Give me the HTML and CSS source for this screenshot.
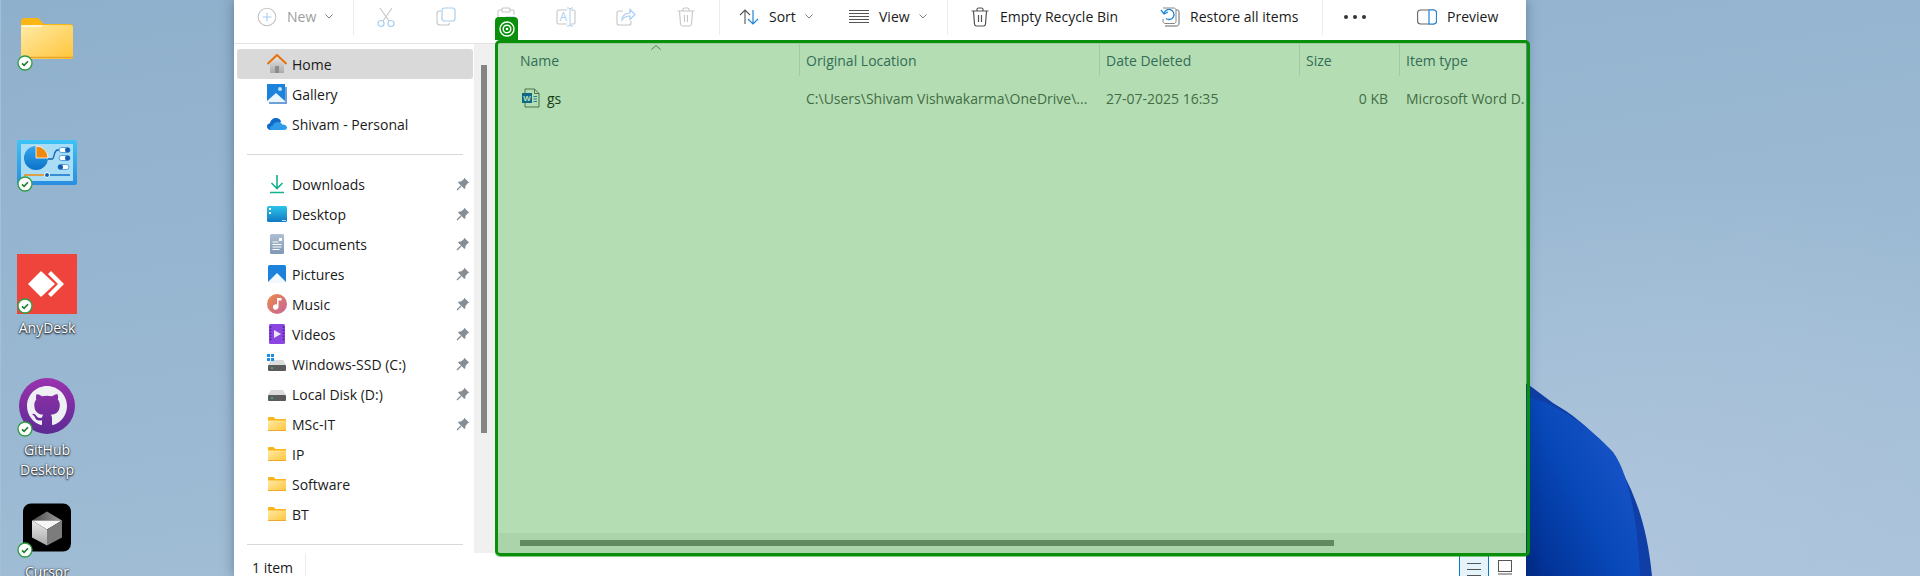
FILE: index.html
```html
<!DOCTYPE html>
<html lang="en">
<head>
<meta charset="utf-8">
<title>Recycle Bin</title>
<link rel="stylesheet" href="styles.css">
</head>
<body>
<svg class="defs" aria-hidden="true">
  <defs>
    <linearGradient id="gFolder" x1="0" y1="0" x2="1" y2="1"><stop offset="0" stop-color="#ffeaa6"/><stop offset="1" stop-color="#ffc53a"/></linearGradient>
    <linearGradient id="gHouse" x1="0" y1="0" x2="0" y2="1"><stop offset="0" stop-color="#e4e4e4"/><stop offset="1" stop-color="#a9a9a9"/></linearGradient>
    <linearGradient id="gBlob" x1="0" y1="1" x2="1" y2="0.35"><stop offset="0" stop-color="#00207a"/><stop offset="0.3" stop-color="#03369c"/><stop offset="0.6" stop-color="#0748b8"/><stop offset="1" stop-color="#1b55ca"/></linearGradient>
    <linearGradient id="gPurple" x1="0" y1="0" x2="0" y2="1"><stop offset="0" stop-color="#9a33ad"/><stop offset="1" stop-color="#5c2a94"/></linearGradient>
    <linearGradient id="gMusic" x1="0" y1="0" x2="1" y2="1"><stop offset="0" stop-color="#ef8a45"/><stop offset="1" stop-color="#c2649e"/></linearGradient>
    <linearGradient id="gDesk" x1="0" y1="0" x2="0" y2="1"><stop offset="0" stop-color="#2cc4e8"/><stop offset="1" stop-color="#1179c4"/></linearGradient>
    <linearGradient id="gDoc" x1="0" y1="0" x2="0" y2="1"><stop offset="0" stop-color="#aebfd2"/><stop offset="1" stop-color="#7f98b6"/></linearGradient>
    <linearGradient id="gPanel" x1="0" y1="0" x2="0" y2="1"><stop offset="0" stop-color="#3cc4f6"/><stop offset="1" stop-color="#2a8de0"/></linearGradient>
    <linearGradient id="gPie" x1="0" y1="0" x2="0" y2="1"><stop offset="0" stop-color="#36a6ec"/><stop offset="1" stop-color="#0b72c8"/></linearGradient>
    <linearGradient id="gCubeTop" x1="0" y1="0" x2="1" y2="0"><stop offset="0" stop-color="#4a4a4a"/><stop offset="1" stop-color="#a0a0a0"/></linearGradient>
    <linearGradient id="gCubeLeft" x1="0" y1="0" x2="0" y2="1"><stop offset="0" stop-color="#e8e8e8"/><stop offset="1" stop-color="#a8a8a8"/></linearGradient>
    <symbol id="folder" viewBox="0 0 18 14"><path d="M0 1.200C0 .5.5 0 1.200 0h4.300L7.500 2H18v11.200c0 .5-.3.8-.8.8H.8c-.5 0-.8-.3-.8-.8z" fill="#fab51c"/><path d="M0 3.400h18v9.800c0 .5-.3.8-.8.8H.8c-.5 0-.8-.3-.8-.8z" fill="url(#gFolder)"/><path d="M0 13h18v.4c0 .4-.3.6-.7.6H.7c-.4 0-.7-.2-.7-.6z" fill="#eda92a"/></symbol>
    <symbol id="pin" viewBox="0 0 14 14"><path d="M8.300.8l4.900 4.900-1.400.5-2.400 2.800v2l-.9 1L2 5.500l1-.9h2l2.800-2.400z" fill="#858d95"/><path d="M5 9l-4 4" stroke="#858d95" stroke-width="1.300"/></symbol>
    <symbol id="drive" viewBox="0 0 18 11"><path d="M3 0h12l3 5H0z" fill="#dcdcdc"/><rect y="5" width="18" height="6" rx="1" fill="#5b5b5b"/><rect x="3" y="7.500" width="2" height="1.200" fill="#3fd264"/></symbol>
    <symbol id="badge" viewBox="0 0 16 16"><circle cx="8" cy="8" r="7" fill="#fff" stroke="#2f9c44" stroke-width="1.300"/><path d="M5 8.300l2.100 2L11 6.200" fill="none" stroke="#1f7a33" stroke-width="1.600"/></symbol>
    <symbol id="chev" viewBox="0 0 8 5"><path d="M.5.5L4 4 7.500.5" fill="none" stroke="#808080" stroke-width="1"/></symbol>
  </defs>
</svg>

<div class="desktop">
  <svg class="blob" viewBox="1500 370 170 206">
    <path d="M1500 370L1529 385 1553 403C1600 430 1643 478 1652 576H1500z" fill="#0e3ea6"/>
    <path d="M1500 394L1526 397C1560 404 1590 428 1613 452 1628 472 1638 520 1640 576H1500z" fill="url(#gBlob)"/>
  </svg>

  <div class="desk-icon di-folder">
    <svg class="big-folder" viewBox="0 0 52 41">
      <path d="M0 4C0 1.500 1.500 0 3.500 0h13.500l6 6h26c2 0 3 1 3 3v29c0 2-1 3-3 3H3c-2 0-3-1-3-3z" fill="#fbb614"/>
      <path d="M0 7h49c2 0 3 1 3 3v28c0 2-1 3-3 3H3c-2 0-3-1-3-3z" fill="url(#gFolder)"/>
      <path d="M1 8h20" stroke="#fff8e6" stroke-width="1.500"/>
      <path d="M0 39.500h52" stroke="#e6a42c" stroke-width="1.500"/>
    </svg>
    <svg class="badge"><use href="#badge"/></svg>
  </div>
  <div class="desk-icon di-control">
    <svg class="big-square" viewBox="0 0 60 45">
      <rect width="60" height="45" rx="2" fill="url(#gPanel)"/>
      <rect x="4" y="4" width="52" height="37" fill="#a9ddf6"/>
      <circle cx="19" cy="18" r="12" fill="url(#gPie)"/>
      <path d="M19 6a12 12 0 0 1 12 12H19z" fill="#ef8a0c" stroke="#fff" stroke-width=".8"/>
      <path d="M31 19h4c3 0 1-9 6-9h2" fill="none" stroke="#1260b0" stroke-width="1.300"/>
      <rect x="42" y="7.500" width="11" height="5" rx="2.500" fill="#fff" stroke="#2f8fdc" stroke-width=".8"/><circle cx="50.500" cy="10" r="2.500" fill="#1260b0"/>
      <rect x="42" y="15.500" width="11" height="5" rx="2.500" fill="#fff" stroke="#2f8fdc" stroke-width=".8"/><circle cx="50.500" cy="18" r="2.500" fill="#1260b0"/>
      <rect x="41" y="24.500" width="11" height="5" rx="2.500" fill="#fff" stroke="#2f8fdc" stroke-width=".8"/><circle cx="43.500" cy="27" r="2.500" fill="#1260b0"/>
      <path d="M7 35h23" stroke="#ef8a0c" stroke-width="1.500"/>
      <path d="M30 35h23" stroke="#1373c8" stroke-width="1.500"/>
      <circle cx="30" cy="35" r="2.500" fill="#1260b0" stroke="#fff"/>
    </svg>
    <svg class="badge"><use href="#badge"/></svg>
  </div>
  <div class="desk-icon di-any">
    <svg class="big-any" viewBox="0 0 60 60">
      <rect width="60" height="60" fill="#ef443b"/>
      <path d="M24 17l14 13-14 13-13-13z" fill="#fff"/>
      <path d="M34 17l13 13-13 13-3-3 10-10-10-10z" fill="#fff"/>
    </svg>
    <svg class="badge"><use href="#badge"/></svg>
    <span class="desk-label">AnyDesk</span>
  </div>
  <div class="desk-icon di-git">
    <svg class="big-git" viewBox="0 0 56 56">
      <circle cx="28" cy="28" r="28" fill="url(#gPurple)"/>
      <g transform="translate(8 8) scale(2.500)"><path fill="#eef0f4" fill-rule="evenodd" d="M8 0C3.580 0 0 3.580 0 8c0 3.540 2.290 6.530 5.470 7.590.4.070.55-.17.55-.38 0-.19-.01-.82-.01-1.490-2.010.37-2.530-.49-2.690-.94-.09-.23-.48-.94-.82-1.130-.28-.15-.68-.52-.01-.53.63-.01 1.080.58 1.230.82.72 1.210 1.870.87 2.330.66.070-.52.28-.87.51-1.070-1.780-.2-3.640-.89-3.640-3.950 0-.87.31-1.590.82-2.150-.08-.2-.36-1.020.08-2.120 0 0 .67-.21 2.200.82.64-.18 1.320-.27 2-.27.68 0 1.360.09 2 .27 1.530-1.040 2.200-.82 2.200-.82.44 1.100.16 1.920.08 2.120.51.56.82 1.270.82 2.150 0 3.070-1.870 3.750-3.650 3.950.29.25.54.73.54 1.480 0 1.070-.01 1.930-.01 2.200 0 .21.15.46.55.38A8.013 8.013 0 0 0 16 8c0-4.420-3.580-8-8-8z"/></g>
    </svg>
    <svg class="badge"><use href="#badge"/></svg>
    <span class="desk-label">GitHub<br>Desktop</span>
  </div>
  <div class="desk-icon di-cursor">
    <svg class="big-cursor" viewBox="0 0 48 48">
      <rect width="48" height="48" rx="8" fill="#000"/>
      <path d="M9 17L24 8l15 9z" fill="url(#gCubeTop)"/>
      <path d="M9 17h30L24 26z" fill="#f6f6f6"/>
      <path d="M9 17l15 9v16L9 34z" fill="url(#gCubeLeft)"/>
      <path d="M39 17v17l-15 8V26z" fill="#7c7c7c"/>
    </svg>
    <svg class="badge"><use href="#badge"/></svg>
    <span class="desk-label">Cursor</span>
  </div>

  <div class="window">
    <header class="toolbar">
      <div class="tb-btn tb-new is-off">
        <svg class="ic20" viewBox="0 0 20 20"><circle cx="10" cy="10" r="8.800" fill="none" stroke="#c4c4c4" stroke-width="1.100"/><path d="M10 5.500v9M5.500 10h9" stroke="#a9cff0" stroke-width="1.100"/></svg>
        <span>New</span>
        <svg class="chev"><use href="#chev"/></svg>
      </div>
      <div class="tb-sep"></div>
      <div class="tb-icons">
        <div class="tb-icon"><svg class="ic20" viewBox="0 0 20 20"><path d="M4 1l9 13M16 1L7 14" stroke="#c6c6c6" stroke-width="1.100" fill="none"/><circle cx="5" cy="16.500" r="3" fill="none" stroke="#a9cff0" stroke-width="1.200"/><circle cx="15" cy="16.500" r="3" fill="none" stroke="#a9cff0" stroke-width="1.200"/></svg></div>
        <div class="tb-icon"><svg class="ic20" viewBox="0 0 20 20"><path d="M5 4H3.500C2 4 1 5 1 6.500V15c0 2 1 3 3 3h7c1.500 0 2.500-1 2.500-2" fill="none" stroke="#c6c6c6" stroke-width="1.100"/><rect x="6" y="1" width="13" height="13" rx="2.500" fill="none" stroke="#a9cff0" stroke-width="1.200"/></svg></div>
        <div class="tb-icon"><svg class="ic20" viewBox="0 0 20 20"><path d="M6 3H3.500C2.500 3 2 3.500 2 4.500V17c0 1 .5 1.500 1.500 1.500H8M14 3h2.500c1 0 1.500.5 1.500 1.500V8" fill="none" stroke="#c6c6c6" stroke-width="1.100"/><rect x="6" y="1" width="8" height="4" rx="1" fill="none" stroke="#c6c6c6" stroke-width="1.100"/><rect x="9" y="10" width="10" height="9" rx="1.500" fill="none" stroke="#a9cff0" stroke-width="1.200"/></svg></div>
        <div class="tb-icon"><svg class="ic20" viewBox="0 0 20 20"><path d="M11 3H2.500C1.500 3 1 3.500 1 4.500v11c0 1 .5 1.500 1.500 1.500H11M15 3h2.500c1 0 1.500.5 1.500 1.500v11c0 1-.5 1.500-1.500 1.500H15" fill="none" stroke="#c6c6c6" stroke-width="1.100"/><path d="M11 1h2l1 1 1-1h2M14 2v16M11 19h2l1-1 1 1h2" fill="none" stroke="#a9cff0" stroke-width="1"/><text class="ic-letter" x="3.500" y="14">A</text></svg></div>
        <div class="tb-icon"><svg class="ic20" viewBox="0 0 20 20"><path d="M7 4H3C2 4 1 5 1 6v10c0 1 1 2 2 2h10c1 0 2-1 2-2v-2" fill="none" stroke="#c6c6c6" stroke-width="1.100"/><path d="M6 13c0-4 3-7 8-7V2.500l5 5-5 5V9c-3 0-6 1-8 4z" fill="none" stroke="#a9cff0" stroke-width="1.200"/></svg></div>
        <div class="tb-icon"><svg class="ic20" viewBox="0 0 20 20"><path d="M1.500 4h17M7 4V2.500C7 1.500 7.500 1 8.500 1h3c1 0 1.500.5 1.500 1.500V4M3.500 4l1 13c.1 1 .8 2 2 2h7c1.200 0 1.900-1 2-2l1-13M8.500 8v7M11.500 8v7" fill="none" stroke="#c6c6c6" stroke-width="1.100"/></svg></div>
      </div>
      <div class="tb-sep"></div>
      <div class="tb-btn tb-sort">
        <svg class="ic20" viewBox="0 0 20 20"><path d="M6 17V3M1 8l5-5 5 5" fill="none" stroke="#555" stroke-width="1.100"/><path d="M14 3v14M9 12l5 5 5-5" fill="none" stroke="#1b86dc" stroke-width="1.200"/></svg>
        <span>Sort</span>
        <svg class="chev"><use href="#chev"/></svg>
      </div>
      <div class="tb-btn tb-view">
        <svg class="ic20" viewBox="0 0 20 20"><path d="M0 3.500h20M0 6.500h20M0 9.500h20M0 12.500h20M0 15.500h20" stroke="#555" stroke-width="1"/></svg>
        <span>View</span>
        <svg class="chev"><use href="#chev"/></svg>
      </div>
      <div class="tb-sep"></div>
      <div class="tb-btn tb-empty">
        <svg class="ic20" viewBox="0 0 20 20"><path d="M1.500 4h17M7 4V2.500C7 1.500 7.500 1 8.500 1h3c1 0 1.500.5 1.500 1.500V4M3.500 4l1 13c.1 1 .8 2 2 2h7c1.200 0 1.900-1 2-2l1-13M8.500 8v7M11.500 8v7" fill="none" stroke="#555" stroke-width="1.200"/></svg>
        <span>Empty Recycle Bin</span>
      </div>
      <div class="tb-btn tb-restore">
        <svg class="ic20" viewBox="0 0 20 20"><path d="M16 3h1.500c.8 0 1.500.7 1.500 1.500v12c0 1.500-1 2.500-2.500 2.500H5" fill="none" stroke="#666" stroke-width="1"/><path d="M3 1h11c1 0 2 1 2 2v11.500c0 1-1 2-2 2H5c-1 0-2-1-2-2V12" fill="none" stroke="#888" stroke-width="1"/><path d="M4 7a5 5 0 1 1 2 4.500M1 3l3 4 4-2" fill="none" stroke="#1b86dc" stroke-width="1.300"/></svg>
        <span>Restore all items</span>
      </div>
      <div class="tb-sep"></div>
      <div class="tb-dots"><i></i><i></i><i></i></div>
      <div class="tb-btn tb-preview">
        <svg class="ic20" viewBox="0 0 20 20"><rect x=".6" y="3" width="18.800" height="14" rx="3" fill="none" stroke="#666" stroke-width="1.100"/><path d="M12 3h4.500c1.500 0 3 1.300 3 3v8c0 1.700-1.500 3-3 3H12z" fill="#fff" stroke="#1b86dc" stroke-width="1.200"/></svg>
        <span>Preview</span>
      </div>
    </header>

    <div class="body">
      <nav class="nav">
        <div class="nav-row is-on">
          <svg class="ic20" viewBox="0 0 20 20"><path d="M3 10l7-7 7 7v9H3z" fill="url(#gHouse)"/><rect x="8" y="12" width="4" height="7" fill="#8d8d8d"/><path d="M.5 10L10 1l9.500 9" fill="none" stroke="#e8720c" stroke-width="2"/></svg>
          <span>Home</span>
        </div>
        <div class="nav-row">
          <svg class="ic20" viewBox="0 0 20 20"><rect x="2" y="3" width="18" height="17" fill="#6e9fd8"/><rect y="0" width="18" height="18" fill="#1c82dc"/><path d="M0 17l9-8 9 8v1H0z" fill="#eaf4fc"/><circle cx="13" cy="5" r="2" fill="#bfe0f8"/></svg>
          <span>Gallery</span>
        </div>
        <div class="nav-row">
          <svg class="ic20" viewBox="0 0 20 14"><path d="M4 13C1 13 0 11 0 9.500 0 8 1 6.500 3 6.300 3.500 3 6 1 9 1c2.500 0 4.500 1.500 5 3.500L8 13z" fill="#0f6cc8"/><path d="M5 13c-1.500 0-2-1-2-2s.8-2 2.500-2c.7-2.500 3-4 5.500-4 2 0 3.500 1 4.300 2.500C18.500 7.500 20 9 20 10.500S19 13 17 13z" fill="#2e9bea"/></svg>
          <span>Shivam - Personal</span>
        </div>
        <div class="nav-sep"></div>
        <div class="nav-row">
          <svg class="ic20" viewBox="0 0 20 20"><path d="M10 1v13M4.500 9l5.500 5.500L15.500 9M3 18.500h14" fill="none" stroke="#14b08f" stroke-width="1.600"/></svg>
          <span>Downloads</span><svg class="pin"><use href="#pin"/></svg>
        </div>
        <div class="nav-row">
          <svg class="ic20" viewBox="0 0 20 16"><rect width="20" height="16" rx="1.500" fill="url(#gDesk)"/><rect x="2" y="2" width="2" height="2" fill="#fff"/><rect x="2" y="6" width="2" height="2" fill="#fff"/><rect x="15" y="14" width="4" height="1" fill="#bfe6f6"/></svg>
          <span>Desktop</span><svg class="pin"><use href="#pin"/></svg>
        </div>
        <div class="nav-row">
          <svg class="ic20" viewBox="0 0 20 20"><rect x="3" width="14" height="20" rx="1.500" fill="url(#gDoc)"/><path d="M5.500 8h6M5.500 10.500h9M5.500 13h9M5.500 15.500h7" stroke="#fff" stroke-width="1"/><rect x="12" y="4" width="3" height="3" fill="#fff"/></svg>
          <span>Documents</span><svg class="pin"><use href="#pin"/></svg>
        </div>
        <div class="nav-row">
          <svg class="ic20" viewBox="0 0 20 20"><rect x="1" y="1" width="18" height="18" rx="1.500" fill="#1c82dc"/><path d="M1 18l9-9 9 9v1H1z" fill="#f2f8fd"/></svg>
          <span>Pictures</span><svg class="pin"><use href="#pin"/></svg>
        </div>
        <div class="nav-row">
          <svg class="ic20" viewBox="0 0 20 20"><circle cx="10" cy="10" r="10" fill="url(#gMusic)"/><path d="M10 4h4.500v2.500H11.500V13a2.800 2.800 0 1 1-1.500-2.500z" fill="#fff"/></svg>
          <span>Music</span><svg class="pin"><use href="#pin"/></svg>
        </div>
        <div class="nav-row">
          <svg class="ic20" viewBox="0 0 20 20"><rect x="2" width="16" height="20" rx="1.500" fill="#8b45e0"/><path d="M7 6l7 4-7 4z" fill="#f0e6fb"/><path d="M3.500 2.500v15M16.500 2.500v15" stroke="#4e2199" stroke-width="1.600" stroke-dasharray="1.500 1.500"/></svg>
          <span>Videos</span><svg class="pin"><use href="#pin"/></svg>
        </div>
        <div class="nav-row">
          <span class="drive-wrap">
            <svg class="ic-win" viewBox="0 0 7 7"><path d="M0 0h3v3H0zM4 0h3v3H4zM0 4h3v3H0zM4 4h3v3H4z" fill="#1b8fe8"/></svg>
            <svg class="ic-drive"><use href="#drive"/></svg>
          </span>
          <span>Windows-SSD (C:)</span><svg class="pin"><use href="#pin"/></svg>
        </div>
        <div class="nav-row">
          <span class="drive-wrap"><svg class="ic-drive"><use href="#drive"/></svg></span>
          <span>Local Disk (D:)</span><svg class="pin"><use href="#pin"/></svg>
        </div>
        <div class="nav-row">
          <svg class="ic-folder"><use href="#folder"/></svg>
          <span>MSc-IT</span><svg class="pin"><use href="#pin"/></svg>
        </div>
        <div class="nav-row"><svg class="ic-folder"><use href="#folder"/></svg><span>IP</span></div>
        <div class="nav-row"><svg class="ic-folder"><use href="#folder"/></svg><span>Software</span></div>
        <div class="nav-row"><svg class="ic-folder"><use href="#folder"/></svg><span>BT</span></div>
        <div class="nav-sep"></div>
      </nav>
      <div class="nav-track"><div class="nav-thumb"></div></div>

      <main class="files">
        <div class="cols head">
          <div class="col first">Name<svg class="sort-caret" viewBox="0 0 10 5"><path d="M.5 4.500L5 .5l4.500 4" fill="none" stroke="#666" stroke-width=".9"/></svg></div>
          <div class="col">Original Location</div>
          <div class="col">Date Deleted</div>
          <div class="col">Size</div>
          <div class="col">Item type</div>
        </div>
        <div class="cols row">
          <div class="col first name-cell">
            <svg class="ic-word" viewBox="0 0 18 20">
              <path d="M3 1h9.500L17 5.500V19H3z" fill="#fff" stroke="#6b6b6b"/>
              <path d="M12.500 1v4.500H17" fill="none" stroke="#6b6b6b"/>
              <path d="M11.500 8.500h3.500M11.500 11h3.500M11.500 13.500h3.500" stroke="#2b7cd3" stroke-width="1"/>
              <rect y="5" width="10" height="10" fill="#185abd"/>
              <text class="ic-w" x="5" y="13">W</text>
            </svg>
            <span>gs</span>
          </div>
          <div class="col dim">C:\Users\Shivam Vishwakarma\OneDrive\...</div>
          <div class="col dim">27-07-2025 16:35</div>
          <div class="col dim right">0 KB</div>
          <div class="col dim">Microsoft Word D.</div>
        </div>
        <div class="hscroll"><div class="hthumb"></div></div>
      </main>
    </div>

    <footer class="status">
      <span class="count">1 item</span>
      <div class="status-sep"></div>
      <div class="view-btn on"><svg viewBox="0 0 14 16" class="ic14"><path d="M0 2.500h14M0 8.500h14M0 14.500h14" stroke="#555" stroke-width="1"/></svg></div>
      <div class="view-btn thumb"><svg viewBox="0 0 14 16" class="ic14"><rect x=".5" y=".5" width="13" height="11" fill="none" stroke="#555"/><path d="M0 14h14" stroke="#555"/></svg></div>
    </footer>
  </div>

  <div class="overlay">
    <div class="tag"><svg class="tag-ic" viewBox="0 0 16 16"><circle cx="8" cy="8" r="7" fill="none" stroke="#fff" stroke-width="1.400"/><circle cx="8" cy="8" r="3.800" fill="none" stroke="#fff" stroke-width="1.400"/><circle cx="8" cy="8" r="1.300" fill="#fff"/></svg></div>
  </div>
</div>
</body>
</html>
```
FILE: styles.css
```css
* { box-sizing: border-box; }
html, body { margin: 0; padding: 0; height: 100%; overflow: hidden; }
body { font-family: "Open Sans", "Noto Sans", "Liberation Sans", sans-serif; font-size: 14px; color: #1a1a1a; }
.defs { position: absolute; width: 0; height: 0; }
svg { display: block; flex: none; }

.desktop {
  position: relative; width: 1920px; height: 576px; overflow: hidden;
  background:
    radial-gradient(ellipse 500px 420px at 1640px 576px, rgba(176, 198, 222, .75), rgba(176, 198, 222, 0)),
    linear-gradient(172deg, #8fb0cc 0%, #9ab8d2 50%, #a9c3da 100%);
  border-left: 1px solid #a6bfd6;
}
.blob { position: absolute; left: 1499px; top: 370px; width: 170px; height: 206px; }

/* desktop icons */
.desk-icon { position: absolute; width: 80px; display: flex; flex-direction: column; align-items: center; left: 6px; }
.badge { position: absolute; left: 10px; width: 16px; height: 16px; }
.desk-label { color: #fff; font-size: 14px; line-height: 20px; text-align: center; text-shadow: 0 1px 2px rgba(0, 0, 0, .95), 0 0 2px rgba(0, 0, 0, .75); margin-top: 4px; }
.di-folder { top: 18px; }
.di-folder .badge { top: 37px; }
.big-folder { width: 52px; height: 41px; }
.di-control { top: 140px; }
.di-control .badge { top: 36px; }
.big-square { width: 60px; height: 45px; }
.di-any { top: 254px; }
.di-any .badge { top: 44px; }
.big-any { width: 60px; height: 60px; }
.di-git { top: 378px; }
.di-git .badge { top: 43px; }
.big-git { width: 56px; height: 56px; }
.di-cursor { top: 503px; }
.di-cursor .badge { top: 39px; }
.big-cursor { width: 48px; height: 49px; }
.di-git .desk-label { margin-top: 6px; }
.di-cursor .desk-label { margin-top: 10px; }

/* window */
.window {
  position: absolute; left: 233px; top: 0; width: 1292px; height: 576px;
  background: #fff; display: flex; flex-direction: column;
  box-shadow: 0 0 12px rgba(20, 40, 70, .4);
}
.toolbar { height: 44px; flex: none; display: flex; align-items: flex-start; border-bottom: 1px solid #e2e2e2; }
.tb-btn { display: flex; align-items: center; height: 33px; gap: 10px; flex: none; }
.tb-btn.is-off { color: #9d9d9d; }
.tb-sep { width: 1px; height: 35px; background: #ececec; flex: none; }
.tb-icons { display: flex; flex: none; padding: 0 3px 0 2px; }
.tb-icon { width: 60px; height: 33px; display: flex; align-items: center; justify-content: center; flex: none; }
.ic20 { width: 20px; height: 20px; }
.chev { width: 8px; height: 5px; margin-left: -1px; }
.ic-letter { font-size: 12px; fill: #a9cff0; font-family: "Open Sans", sans-serif; }
.tb-new { width: 119px; padding-left: 23px; }
.tb-sort { width: 115px; padding-left: 19px; }
.tb-view { width: 112px; padding-left: 14px; }
.tb-empty { width: 190px; padding-left: 22px; }
.tb-restore { width: 184px; padding-left: 22px; }
.tb-dots { width: 64px; height: 33px; display: flex; align-items: center; justify-content: center; gap: 5px; flex: none; }
.tb-dots i { width: 4px; height: 4px; border-radius: 50%; background: #333; display: block; }
.tb-preview { padding-left: 30px; }

.body { flex: 1; min-height: 0; display: flex; }
.nav { width: 240px; flex: none; padding: 5px 0 0 3px; }
.nav-row { height: 30px; width: 236px; display: flex; align-items: center; padding: 0 3px 0 30px; gap: 5px; border-radius: 3px; }
.nav-row.is-on { background: #d9d9d9; }
.nav-sep { height: 1px; width: 216px; margin: 15px 0 14px 10px; background: #d8d8d8; }
.pin { width: 14px; height: 14px; margin-left: auto; }
.ic-folder { width: 18px; height: 14px; margin: 0 1px; }
.drive-wrap { position: relative; width: 20px; height: 20px; display: flex; align-items: center; justify-content: center; }
.ic-drive { width: 18px; height: 11px; margin-top: 2px; }
.ic-win { position: absolute; left: 0; top: 0; width: 7px; height: 7px; }

.nav-track { width: 21px; flex: none; background: #f0f0f0; padding: 21px 0 0 7px; }
.nav-thumb { width: 6px; height: 368px; background: #858585; }

.files { flex: 1; min-width: 0; display: flex; flex-direction: column; overflow: hidden; }
.cols { display: grid; grid-template-columns: 304px 300px 200px 100px 1fr; }
.head { height: 32px; flex: none; color: #4c607a; position: relative; }
.head .col { display: flex; align-items: center; border-left: 1px solid #e5e5e5; padding-left: 6px; }
.head .col.first { border-left: 0; padding-left: 25px; }
.sort-caret { position: absolute; left: 156px; top: 1px; width: 10px; height: 5px; }
.row { margin-top: 10px; height: 24px; flex: none; align-items: center; }
.row .col { padding-left: 7px; white-space: nowrap; overflow: hidden; }
.row .first { padding-left: 27px; }
.name-cell { display: flex; align-items: center; gap: 7px; }
.dim { color: #5f5f5f; }
.row .right { text-align: right; padding-right: 11px; }
.ic-word { width: 18px; height: 20px; }
.ic-w { font-size: 8px; font-weight: 700; fill: #fff; text-anchor: middle; font-family: "Liberation Sans", sans-serif; }
.hscroll { margin-top: auto; height: 20px; flex: none; background: #f2f2f2; padding: 7px 0 0 25px; }
.hthumb { width: 814px; height: 6px; background: #8a8a8a; }

.status { height: 23px; flex: none; display: flex; align-items: flex-start; overflow: hidden; }
.count { width: 71px; padding: 7px 0 0 18px; line-height: 16px; }
.status-sep { width: 1px; height: 23px; background: #ececec; margin-right: auto; }
.view-btn { width: 30px; height: 30px; display: flex; justify-content: center; padding-top: 7px; }
.view-btn.on { background: #e5f3fb; border: 1px solid #0f78c4; }
.view-btn.thumb { margin-right: 7px; padding-left: 1px; }
.ic14 { width: 14px; height: 16px; }

/* green highlight over the file list */
.overlay {
  position: absolute; left: 494px; top: 40px; width: 1035px; height: 516px;
  border: 3px solid #0a8f0a; border-radius: 5px;
  background: rgba(0, 140, 0, .294); background-clip: padding-box;
  box-shadow: 0 1px 0 rgba(10, 143, 10, .5);
}
.tag {
  position: absolute; left: -3px; top: -26px; width: 23px; height: 23px;
  background: #0a8f0a; border-radius: 4px 4px 0 0;
  display: flex; align-items: center; justify-content: center;
}
.tag-ic { width: 16px; height: 16px; }
```
